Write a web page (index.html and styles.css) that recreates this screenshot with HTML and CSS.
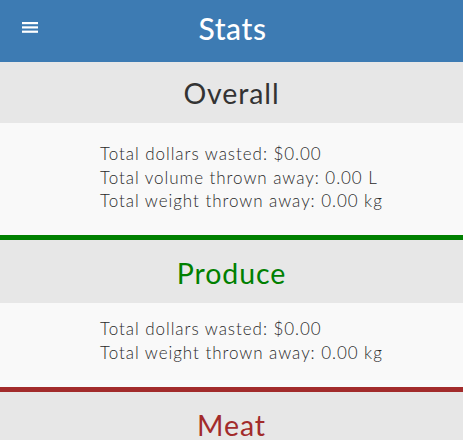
FILE: index.html
```html
<!DOCTYPE html>
<html lang="en">
<head>
<meta charset="utf-8">
<title>Stats</title>
<link rel="stylesheet" href="styles.css">
</head>
<body>
<header class="topbar">
  <button class="menu-btn" aria-label="Menu">
    <svg width="16" height="11" viewBox="0 0 16 11" aria-hidden="true">
      <rect x="0" y="0" width="16" height="2.2" fill="#fff"/>
      <rect x="0" y="4.3" width="16" height="2.2" fill="#fff"/>
      <rect x="0" y="8.6" width="16" height="2.2" fill="#fff"/>
    </svg>
  </button>
  <h1 class="topbar-title">Stats</h1>
</header>

<section class="category">
  <h2 class="cat-title">Overall</h2>
  <div class="cat-body cat-body--overall">
    <div class="stat-list">
      <div>Total dollars wasted: $0.00</div>
      <div>Total volume thrown away: 0.00 L</div>
      <div>Total weight thrown away: 0.00 kg</div>
    </div>
  </div>
</section>

<section class="category category--produce">
  <h2 class="cat-title">Produce</h2>
  <div class="cat-body">
    <div class="stat-list">
      <div>Total dollars wasted: $0.00</div>
      <div>Total weight thrown away: 0.00 kg</div>
    </div>
  </div>
</section>

<section class="category category--meat">
  <h2 class="cat-title">Meat</h2>
  <div class="cat-body">
    <div class="stat-list">
      <div>Total dollars wasted: $0.00</div>
      <div>Total weight thrown away: 0.00 kg</div>
    </div>
  </div>
</section>
</body>
</html>
```
FILE: styles.css
```css
* { box-sizing: border-box; }

html, body {
  margin: 0;
  padding: 0;
}

body {
  font-family: Lato, "Open Sans", "Liberation Sans", sans-serif;
  background: #f9f9f9;
  color: #333;
  overflow: hidden;
}

.topbar {
  position: relative;
  height: 62px;
  background: #3d7bb3;
  display: flex;
  align-items: center;
  justify-content: center;
}

.menu-btn {
  position: absolute;
  left: 22px;
  top: 22px;
  padding: 0;
  border: 0;
  background: none;
  display: flex;
  line-height: 0;
}

.topbar-title {
  margin: 0 0 6px 2px;
  font-size: 30px;
  font-weight: 500;
  color: #fff;
  letter-spacing: 0.6px;
}

.category--produce { border-top: 5px solid #008000; }
.category--meat { border-top: 5px solid #a22b2b; }

.cat-title {
  margin: 0;
  height: 61px;
  display: flex;
  align-items: center;
  justify-content: center;
  background: #e7e7e7;
  font-size: 28.5px;
  font-weight: 400;
  color: #333;
  letter-spacing: 0.9px;
}

.category--produce .cat-title { color: #008000; height: 63px; padding-top: 3px; }
.category--meat .cat-title { color: #a22b2b; padding-top: 5px; }

.cat-body {
  background: #f9f9f9;
  padding: 14px 0 22px 100px;
  font-size: 17px;
  font-weight: 300;
  line-height: 23.7px;
  letter-spacing: 0.95px;
  color: #2a2a2a;
}

.cat-body--overall { padding-top: 19px; }
```
